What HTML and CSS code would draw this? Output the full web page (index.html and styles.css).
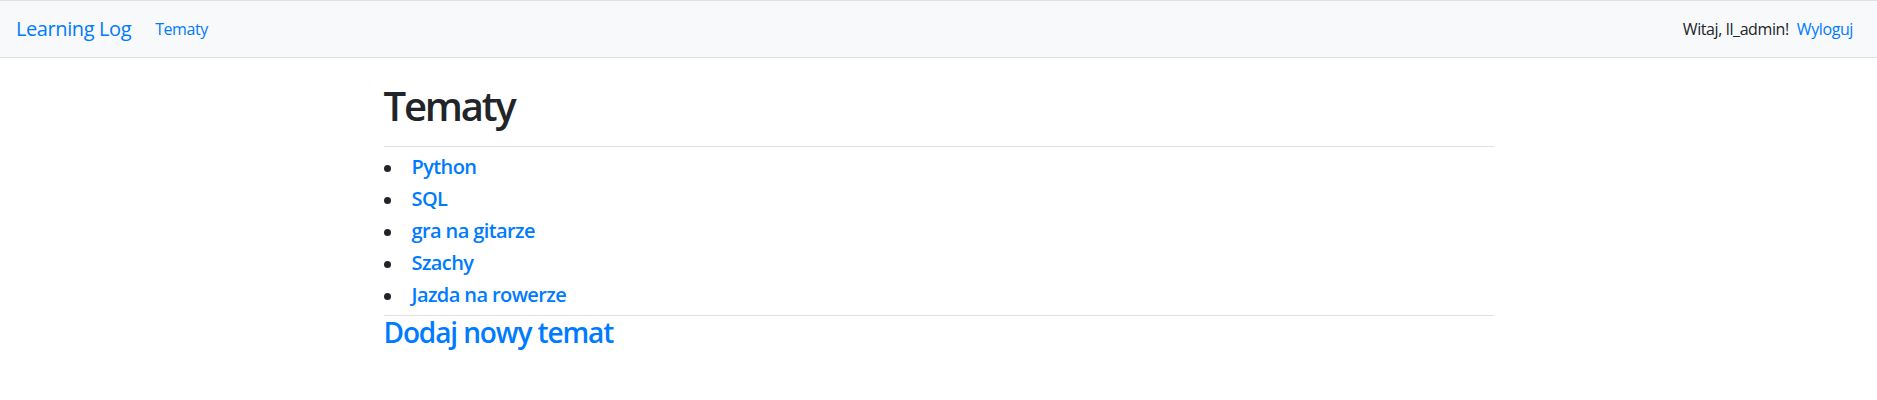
FILE: index.html
```html
<!DOCTYPE html>
<html lang="pl">
<head>
<meta charset="utf-8">
<title>Learning Log</title>
<link rel="stylesheet" href="styles.css">
</head>
<body>
<nav class="navbar">
  <div class="nav-left">
    <a class="brand" href="#">Learning Log</a>
    <ul class="nav-list">
      <li><a class="nav-link" href="#">Tematy</a></li>
    </ul>
  </div>
  <ul class="nav-list nav-right">
    <li><span class="nav-text">Witaj, ll_admin!</span></li>
    <li><a class="nav-link" href="#">Wyloguj</a></li>
  </ul>
</nav>
<main class="container">
  <div class="page-header">
    <h1 class="title">Tematy</h1>
  </div>
  <div class="content">
    <ul class="topics">
      <li class="topic"><h5 class="topic-title"><a href="#">Python</a></h5></li>
      <li class="topic"><h5 class="topic-title"><a href="#">SQL</a></h5></li>
      <li class="topic"><h5 class="topic-title"><a href="#">gra na gitarze</a></h5></li>
      <li class="topic"><h5 class="topic-title"><a href="#">Szachy</a></h5></li>
      <li class="topic"><h5 class="topic-title"><a href="#">Jazda na rowerze</a></h5></li>
    </ul>
    <h3 class="add-topic"><a href="#">Dodaj nowy temat</a></h3>
  </div>
</main>
</body>
</html>
```
FILE: styles.css
```css
*, *::before, *::after {
  box-sizing: border-box;
}
html, body {
  margin: 0;
  padding: 0;
  background: #fff;
}
body {
  font-family: "Open Sans", "Noto Sans", "Liberation Sans", sans-serif;
  font-size: 16px;
  line-height: 1.5;
  color: #212529;
  letter-spacing: -0.025em;
}
a {
  color: #007bff;
  text-decoration: none;
}
.navbar {
  display: flex;
  align-items: center;
  justify-content: space-between;
  padding: 8px 16px;
  background: #f8f9fa;
  border-top: 1px solid #dee2e6;
  border-bottom: 1px solid #dee2e6;
}
.nav-left {
  display: flex;
  align-items: center;
}
.brand {
  font-size: 20px;
  line-height: 30px;
  padding: 5px 0;
  margin-right: 16px;
  white-space: nowrap;
}
.nav-list {
  display: flex;
  align-items: center;
  list-style: none;
  margin: 0;
  padding: 0;
}
.nav-link {
  display: block;
  padding: 8px;
}
.nav-text {
  display: block;
  padding: 8px 0;
  color: #212529;
}
.container {
  max-width: 1140px;
  margin: 24px auto 0;
  padding: 0 15px;
}
.page-header {
  padding-bottom: 8px;
  margin-bottom: 8px;
  border-bottom: 1px solid #dee2e6;
}
.title {
  margin: 0 0 8px;
  font-size: 40px;
  font-weight: 600;
  line-height: 1.2;
  letter-spacing: -0.055em;
}
.topics {
  list-style: none;
  margin: 0;
  padding: 0;
  border-bottom: 1px solid #dee2e6;
}
.topic {
  display: flex;
  align-items: center;
  gap: 21px;
  margin-bottom: 8px;
}
.topic::before {
  content: "";
  flex: none;
  width: 7px;
  height: 7px;
  margin-top: 2px;
  border-radius: 50%;
  background: #212529;
}
.topic-title {
  margin: 0;
  font-size: 20px;
  font-weight: 600;
  line-height: 1.2;
  letter-spacing: -0.03em;
}
.add-topic {
  margin: 0 0 8px;
  font-size: 28px;
  font-weight: 600;
  line-height: 1.2;
  letter-spacing: -0.04em;
}
```
